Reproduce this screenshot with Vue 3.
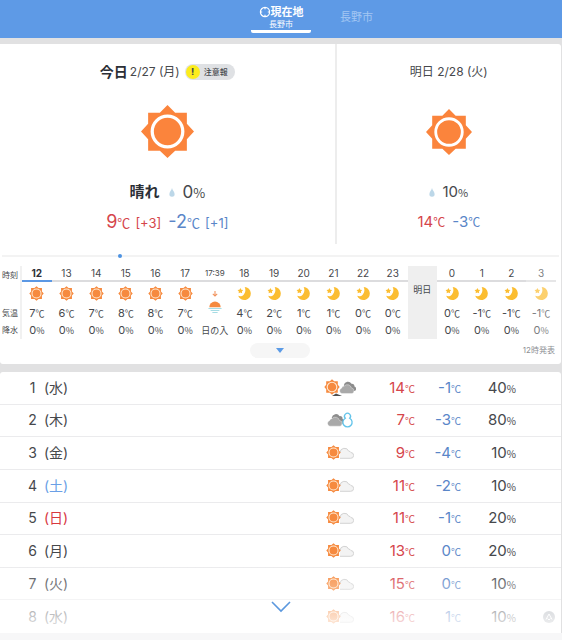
<script setup>
import { ref } from 'vue'

const scrub = ref(21)

const hours = [
  { h: '12', icon: 'sun', t: '7', p: '0', now: true },
  { h: '13', icon: 'sun', t: '6', p: '0' },
  { h: '14', icon: 'sun', t: '7', p: '0' },
  { h: '15', icon: 'sun', t: '8', p: '0' },
  { h: '16', icon: 'sun', t: '8', p: '0' },
  { h: '17', icon: 'sun', t: '7', p: '0' },
  { h: '17:39', kind: 'sunset' },
  { h: '18', icon: 'moon', t: '4', p: '0' },
  { h: '19', icon: 'moon', t: '2', p: '0' },
  { h: '20', icon: 'moon', t: '1', p: '0' },
  { h: '21', icon: 'moon', t: '1', p: '0' },
  { h: '22', icon: 'moon', t: '0', p: '0' },
  { h: '23', icon: 'moon', t: '0', p: '0' },
  { kind: 'day', label: '明日' },
  { h: '0', icon: 'moon', t: '0', p: '0' },
  { h: '1', icon: 'moon', t: '-1', p: '0' },
  { h: '2', icon: 'moon', t: '-1', p: '0' },
  { h: '3', icon: 'moon', t: '-1', p: '0', dim: true },
]
const plain = hours.filter((x) => x.kind !== 'day')
const temps = hours.filter((x) => !x.kind)

const days = [
  { d: 1, w: '水', icon: 'sun-then-clouds', hi: '14', lo: '-1', p: 40 },
  { d: 2, w: '木', icon: 'clouds-snow', hi: '7', lo: '-3', p: 80 },
  { d: 3, w: '金', icon: 'sun-cloud', hi: '9', lo: '-4', p: 10 },
  { d: 4, w: '土', icon: 'sun-cloud', hi: '11', lo: '-2', p: 10, cls: 'sat' },
  { d: 5, w: '日', icon: 'sun-cloud', hi: '11', lo: '-1', p: 20, cls: 'sunday' },
  { d: 6, w: '月', icon: 'sun-cloud', hi: '13', lo: '0', p: 20 },
  { d: 7, w: '火', icon: 'sun-cloud', hi: '15', lo: '0', p: 10 },
  { d: 8, w: '水', icon: 'sun-cloud', hi: '16', lo: '1', p: 10 },
]
</script>

<template>
  <div class="page">
    <svg class="defs" aria-hidden="true">
      <symbol id="sun-large" viewBox="0 0 52 52">
        <path d="M26 0l7.5 7.5H45V18.500l7 7.500-7 7.500V45H33.500L26 52l-7.500-7H7V33.500L0 26l7-7.500V7.500h11.500z" fill="#fb843c" />
        <circle cx="26" cy="26" r="15" fill="none" stroke="#fff" stroke-width="3.200" />
      </symbol>
      <symbol id="sun" viewBox="0 0 16 16">
        <path d="M8 .3l2.200 1.900h3.600v3.600L15.700 8l-1.900 2.200v3.600h-3.600L8 15.700l-2.200-1.900H2.200v-3.600L.3 8l1.900-2.200V2.200h3.600z" fill="#f68a3f" />
        <circle cx="8" cy="8" r="4.800" fill="none" stroke="#ffe9d2" stroke-width="1.100" />
      </symbol>
      <symbol id="moon" viewBox="0 0 16 16">
        <path d="M8.200 1a7 7 0 1 1-7 9.500c2 .9 4.400.5 5.900-1.300 2-2.300 2.400-5.600 1.100-8.200z" fill="#fbbd31" />
        <path d="M3.600 2.200l1 1.800 2 .3-1.400 1.500.3 2-1.900-.9-1.900.9.300-2L.6 4.300l2-.3z" fill="#fbbd31" />
      </symbol>
      <symbol id="cloud-pale" viewBox="0 0 16 12">
        <path d="M2 11.300h10.500a2.900 2.900 0 0 0 .4-5.800 2.300 2.300 0 0 0-2.200-1.300A4.500 4.500 0 0 0 2 5.500" fill="#f3f3f3" stroke="#d2d2d2" stroke-width="1" />
      </symbol>
      <symbol id="clouds" viewBox="0 0 18 14">
        <path d="M5 4.500A4.500 4.500 0 0 1 13.300 2.900a3 3 0 0 1 3.200 3 2.700 2.700 0 0 1 .2 5H8z" fill="#8c8c8c" />
        <path d="M3 13.500a3 3 0 0 1-.4-5.800 3.300 3.300 0 0 1 3-2.400 4.500 4.500 0 0 1 7.600 2.200 3.100 3.100 0 0 1 .8 6z" fill="#a9a9a9" stroke="#fff" stroke-width=".4" />
      </symbol>
      <symbol id="sun-cloud" viewBox="0 0 32 18">
        <use href="#cloud-pale" x="14" y="3" width="16" height="12" />
        <use href="#sun" x="2" y="1" width="15" height="15" />
      </symbol>
      <symbol id="sun-then-clouds" viewBox="0 0 32 18">
        <use href="#sun" x="0" y="0" width="16" height="16" />
        <path d="M8 17l4-2.500 6 2.500z" fill="#4f4f4f" />
        <use href="#clouds" x="15" y="2" width="17" height="13" />
      </symbol>
      <symbol id="clouds-snow" viewBox="0 0 32 18">
        <use href="#clouds" x="3" y="2" width="17" height="14" />
        <path d="M21.300 7.300a3 3 0 1 1 4.400 0 4.600 4.600 0 1 1-4.400 0z" fill="#fff" stroke="#63c4ea" stroke-width="1.300" />
      </symbol>
      <symbol id="drop" viewBox="0 0 6 9">
        <path d="M3 0c.5 2.400 2.600 3.800 2.600 6A2.600 2.600 0 0 1 3 8.800 2.600 2.600 0 0 1 .4 6C.4 3.800 2.500 2.400 3 0z" fill="#bcd7e8" />
      </symbol>
      <symbol id="sunset" viewBox="0 0 16 30">
        <path d="M8 2.500v5.500M5.500 5.700L8 8.200l2.500-2.500" fill="none" stroke="#f0915a" stroke-width="1.200" />
        <path d="M1.500 21a6.500 6.500 0 0 1 13 0z" fill="#f68a3f" />
        <path d="M.5 22.500h15M3 24.700h10M5 26.900h6" stroke="#a6dce4" stroke-width="1.200" />
      </symbol>
    </svg>

    <header class="top">
      <nav class="tabs">
        <a href="#current" class="tab active" aria-current="page">
          <span class="place">
            <svg class="locate" viewBox="0 0 12 12" aria-hidden="true">
              <circle cx="6" cy="6" r="4.600" fill="none" stroke="#fff" stroke-width="1.200" />
              <path d="M6 1v2.200M6 8.800V11M1 6h2.200M8.800 6H11" stroke="#fff" stroke-width="1.200" />
            </svg>現在地</span>
          <span class="city">長野市</span>
        </a>
        <a href="#nagano" class="tab other">長野市</a>
      </nav>
    </header>

    <main class="main">
      <section class="card">
        <div class="outlook">
          <article class="day today">
            <h2 class="title"><strong>今日</strong><span>2/27 (月)</span>
              <button type="button" class="alert"><i class="mark">!</i>注意報</button>
            </h2>
            <svg class="hero"><use href="#sun-large" /></svg>
            <p class="sky"><strong>晴れ</strong><svg class="drop"><use href="#drop" /></svg><span class="num">0<small>%</small></span></p>
            <p class="range"><span class="hi">9<small>℃</small> <em>[+3]</em></span><span class="lo">-2<small>℃</small> <em>[+1]</em></span></p>
          </article>
          <article class="day tomorrow">
            <h2 class="title">明日 2/28 (火)</h2>
            <svg class="hero"><use href="#sun-large" /></svg>
            <p class="sky"><svg class="drop"><use href="#drop" /></svg><span class="num">10<small>%</small></span></p>
            <p class="range"><span class="hi">14<small>℃</small></span><span class="lo">-3<small>℃</small></span></p>
          </article>
        </div>

        <input v-model="scrub" class="scrub" type="range" min="0" max="100" aria-label="時刻" />

        <table class="hourly">
          <tbody>
            <tr class="r-hour">
              <th class="label" scope="row">時刻</th>
              <template v-for="(x, i) in hours" :key="i">
                <th v-if="x.kind === 'day'" class="daycell" rowspan="4">{{ x.label }}</th>
                <th v-else class="hour" :class="{ now: x.now, minute: x.kind, dim: x.dim }" scope="col">{{ x.h }}</th>
              </template>
            </tr>
            <tr class="r-icon">
              <td class="label"></td>
              <template v-for="(x, i) in plain" :key="i">
                <td v-if="x.kind" class="setcell" rowspan="2"><svg class="set"><use href="#sunset" /></svg></td>
                <td v-else :class="{ dim: x.dim }"><svg class="ico"><use :href="'#' + x.icon" /></svg></td>
              </template>
            </tr>
            <tr class="r-temp">
              <th class="label" scope="row">気温</th>
              <td v-for="(x, i) in temps" :key="i" :class="{ dim: x.dim }">{{ x.t }}<small>℃</small></td>
            </tr>
            <tr class="r-rain">
              <th class="label" scope="row">降水</th>
              <td v-for="(x, i) in plain" :key="i" :class="{ dim: x.dim, setname: x.kind }">
                <template v-if="x.kind">日の入</template>
                <template v-else>{{ x.p }}<small>%</small></template>
              </td>
            </tr>
          </tbody>
        </table>

        <div class="foot">
          <button type="button" class="expand" aria-label="詳細を開く">
            <svg viewBox="0 0 8 5"><path d="M0 0h8L4 5z" fill="#5b9be6" /></svg>
          </button>
          <span class="issued">12時発表</span>
        </div>
      </section>

      <section class="week">
        <table class="days">
          <tbody>
            <tr v-for="x in days" :key="x.d">
              <th scope="row"><span class="date">{{ x.d }}</span><span :class="x.cls">({{ x.w }})</span></th>
              <td class="pic"><svg><use :href="'#' + x.icon" /></svg></td>
              <td class="hi">{{ x.hi }}<small>℃</small></td>
              <td class="lo">{{ x.lo }}<small>℃</small></td>
              <td>{{ x.p }}<small>%</small></td>
              <td class="tail">
                <svg v-if="x.d === 8" viewBox="0 0 12 12" aria-hidden="true">
                  <circle cx="6" cy="6" r="6" fill="#a6abb2" />
                  <path d="M3 8.500L6 3l3 5.500M4.500 7.500L6 9l1.500-1.500" fill="none" stroke="#fff" stroke-width="1" />
                </svg>
              </td>
            </tr>
          </tbody>
        </table>
        <div class="fade">
          <button type="button" class="more" aria-label="もっと見る">
            <svg viewBox="0 0 20 12"><path d="M1 1l9 9 9-9" fill="none" stroke="#5b98de" stroke-width="1.600" /></svg>
          </button>
        </div>
      </section>
    </main>
  </div>
</template>

<style>
body {
  margin: 0;
  background: #f7f7f8;
}
</style>

<style scoped>
.page {
  min-height: 100vh;
  display: flex;
  flex-direction: column;
  box-sizing: border-box;
  padding-bottom: 7px;
  font-family: Inter, 'Noto Sans CJK JP', sans-serif;
  color: #46484c;
}
.defs {
  position: absolute;
  width: 0;
  height: 0;
}
button {
  border: 0;
  padding: 0;
  font: inherit;
  color: inherit;
  cursor: pointer;
}
small {
  font-family: 'Noto Sans CJK JP', sans-serif;
  font-size: 10px;
  line-height: 1;
}
.hi {
  color: #d5454b;
}
.lo {
  color: #5a86c8;
}

.top {
  background: #5e9ae6;
  height: 38px;
}
.tabs {
  display: grid;
  grid-template-columns: 1fr 60px 1fr;
  height: 100%;
}
.tab {
  color: #fff;
  text-decoration: none;
}
.active {
  grid-column: 2;
  display: flex;
  flex-direction: column;
  align-items: center;
  box-sizing: border-box;
  height: 33px;
  padding-top: 5px;
  border-bottom: 3px solid #fff;
  border-radius: 2px;
}
.place {
  display: flex;
  align-items: center;
  font-size: 11px;
  line-height: 14px;
  font-weight: 700;
  white-space: nowrap;
}
.locate {
  width: 12px;
  height: 12px;
}
.city {
  font-size: 8px;
  line-height: 10px;
}
.other {
  padding-left: 29px;
  font-size: 11px;
  line-height: 34px;
  color: #a3c7f3;
}

.main {
  flex: 1;
  display: flex;
  flex-direction: column;
  gap: 8px;
  padding: 6px 1px 0 0;
  background: #e1e1e2;
}
.card {
  background: #fff;
  border-radius: 0 3px 3px 3px;
}
.outlook {
  display: grid;
  grid-template-columns: 3fr 2fr;
}
.day {
  display: flex;
  flex-direction: column;
  align-items: center;
  height: 200px;
}
.today {
  border-right: 2px solid #ededed;
}
.title {
  display: flex;
  align-items: center;
  gap: 2px;
  margin: 17px 0 0;
  font-size: 12px;
  line-height: 22px;
  font-weight: 400;
}
.title strong {
  font-size: 14px;
  color: #2c2f36;
}
.alert {
  display: flex;
  align-items: center;
  gap: 4px;
  height: 16px;
  margin-left: 3px;
  padding-right: 7px;
  border-radius: 8px;
  background: #dfe1e4;
  font-size: 8px;
  line-height: 16px;
  font-weight: 500;
}
.mark {
  width: 14px;
  height: 14px;
  margin-left: 1px;
  line-height: 14px;
  border-radius: 50%;
  background: #fcec1c;
  font-size: 9px;
  font-style: normal;
  font-weight: 800;
}
.hero {
  width: 53px;
  height: 53px;
  margin: 22px 0;
}
.tomorrow .hero {
  width: 46px;
  height: 46px;
  margin: 26px 0 25px;
}
.sky,
.range {
  display: flex;
  align-items: center;
  margin: 0;
  line-height: 24px;
}
.sky strong {
  font-size: 15px;
  color: #2c2f36;
}
.drop {
  width: 6px;
  height: 9px;
  margin: 0 7px 0 10px;
}
.tomorrow .drop {
  margin-left: 0;
}
.num {
  font-size: 17px;
}
.num small {
  font-size: 13px;
}
.range {
  margin-top: 6px;
  gap: 7px;
  font-size: 18px;
}
.range small,
.range em {
  font-size: 13px;
  font-style: normal;
}
.tomorrow .num,
.tomorrow .range {
  font-size: 15px;
}
.tomorrow .num small {
  font-size: 11px;
}
.tomorrow .range small {
  font-size: 12px;
}

.scrub {
  appearance: none;
  display: block;
  width: calc(100% - 4px);
  height: 4px;
  margin: 10px 2px 8px;
  background: linear-gradient(#f3f3f3, #f3f3f3) center / 100% 2px no-repeat;
}
.scrub::-webkit-slider-thumb {
  appearance: none;
  width: 4px;
  height: 4px;
  border-radius: 50%;
  background: #4d93e2;
}

.hourly {
  width: calc(100% - 5px);
  table-layout: fixed;
  border-collapse: separate;
  border-spacing: 0;
  font-size: 11px;
  text-align: center;
}
.hourly th,
.hourly td {
  padding: 0;
  font-weight: 400;
  white-space: nowrap;
}
.hourly .label {
  width: 22px;
  border-right: 2px solid #f1f1f1;
  box-sizing: border-box;
  font-size: 8px;
}
.hourly .hour {
  font-size: 10px;
  line-height: 14px;
  border-bottom: 2px solid #dcdcde;
}
.hourly .now {
  font-weight: 700;
  color: #2c2f36;
  border-bottom-color: #5b98e4;
}
.hourly .minute {
  font-size: 8px;
}
.hourly .daycell {
  background: #efefef;
  vertical-align: top;
  padding-top: 16px;
  font-size: 9px;
  line-height: 16px;
}
.r-icon {
  height: 22px;
}
.r-temp {
  height: 18px;
  line-height: 18px;
}
.r-rain {
  height: 17px;
  line-height: 17px;
}
.hourly small {
  font-size: 9px;
}
.hourly .setname {
  font-size: 9px;
}
.hourly .setcell {
  vertical-align: top;
}
.ico {
  display: block;
  width: 15px;
  height: 15px;
  margin: auto;
}
.set {
  display: block;
  width: 14px;
  height: 28px;
  margin: 6px auto 0;
}
.dim {
  opacity: 0.7;
}

.foot {
  display: grid;
  grid-template-columns: 1fr 60px 1fr;
  align-items: center;
  padding: 4px 6px 6px 5px;
}
.expand {
  grid-column: 2;
  display: grid;
  place-items: center;
  height: 15px;
  border-radius: 8px;
  background: #f6f6f6;
}
.expand svg {
  width: 8px;
  height: 5px;
}
.issued {
  justify-self: end;
  font-size: 8px;
  line-height: 15px;
  color: #8d8f94;
}

.week {
  position: relative;
  flex: 1;
  display: flex;
  background: #fff;
  border-radius: 3px 3px 0 0;
}
.days {
  flex: 1;
  display: flex;
  font-size: 15px;
}
.days tbody {
  flex: 1;
  display: grid;
  grid-auto-rows: 1fr;
}
.days tr {
  display: grid;
  grid-template-columns: 1fr 40px 55px 46px 55px 45px;
  align-items: center;
  line-height: 20px;
  border-bottom: 1px solid #ebebed;
}
.days tr:last-child {
  border-bottom: 0;
}
.days th {
  display: flex;
  align-items: center;
  padding: 0 0 0 28px;
  font-size: 14px;
  font-weight: 400;
}
.days td {
  padding: 0;
  text-align: right;
}
.date {
  width: 9px;
  margin-right: 7px;
  text-align: center;
}
.sat {
  color: #6a9fe6;
}
.sunday {
  color: #d8383f;
}
.days .pic svg {
  display: block;
  width: 32px;
  height: 18px;
  margin: 0 auto;
}
.days .tail svg {
  display: block;
  width: 12px;
  height: 12px;
  margin-left: 27px;
}
.fade {
  position: absolute;
  inset: auto 0 0;
  height: 68px;
  display: flex;
  justify-content: center;
  align-items: center;
  background: linear-gradient(rgba(255, 255, 255, 0), rgba(255, 255, 255, 0.9));
}
.more {
  padding: 16px 8px 0;
  background: none;
}
.more svg {
  display: block;
  width: 20px;
  height: 12px;
}
</style>
